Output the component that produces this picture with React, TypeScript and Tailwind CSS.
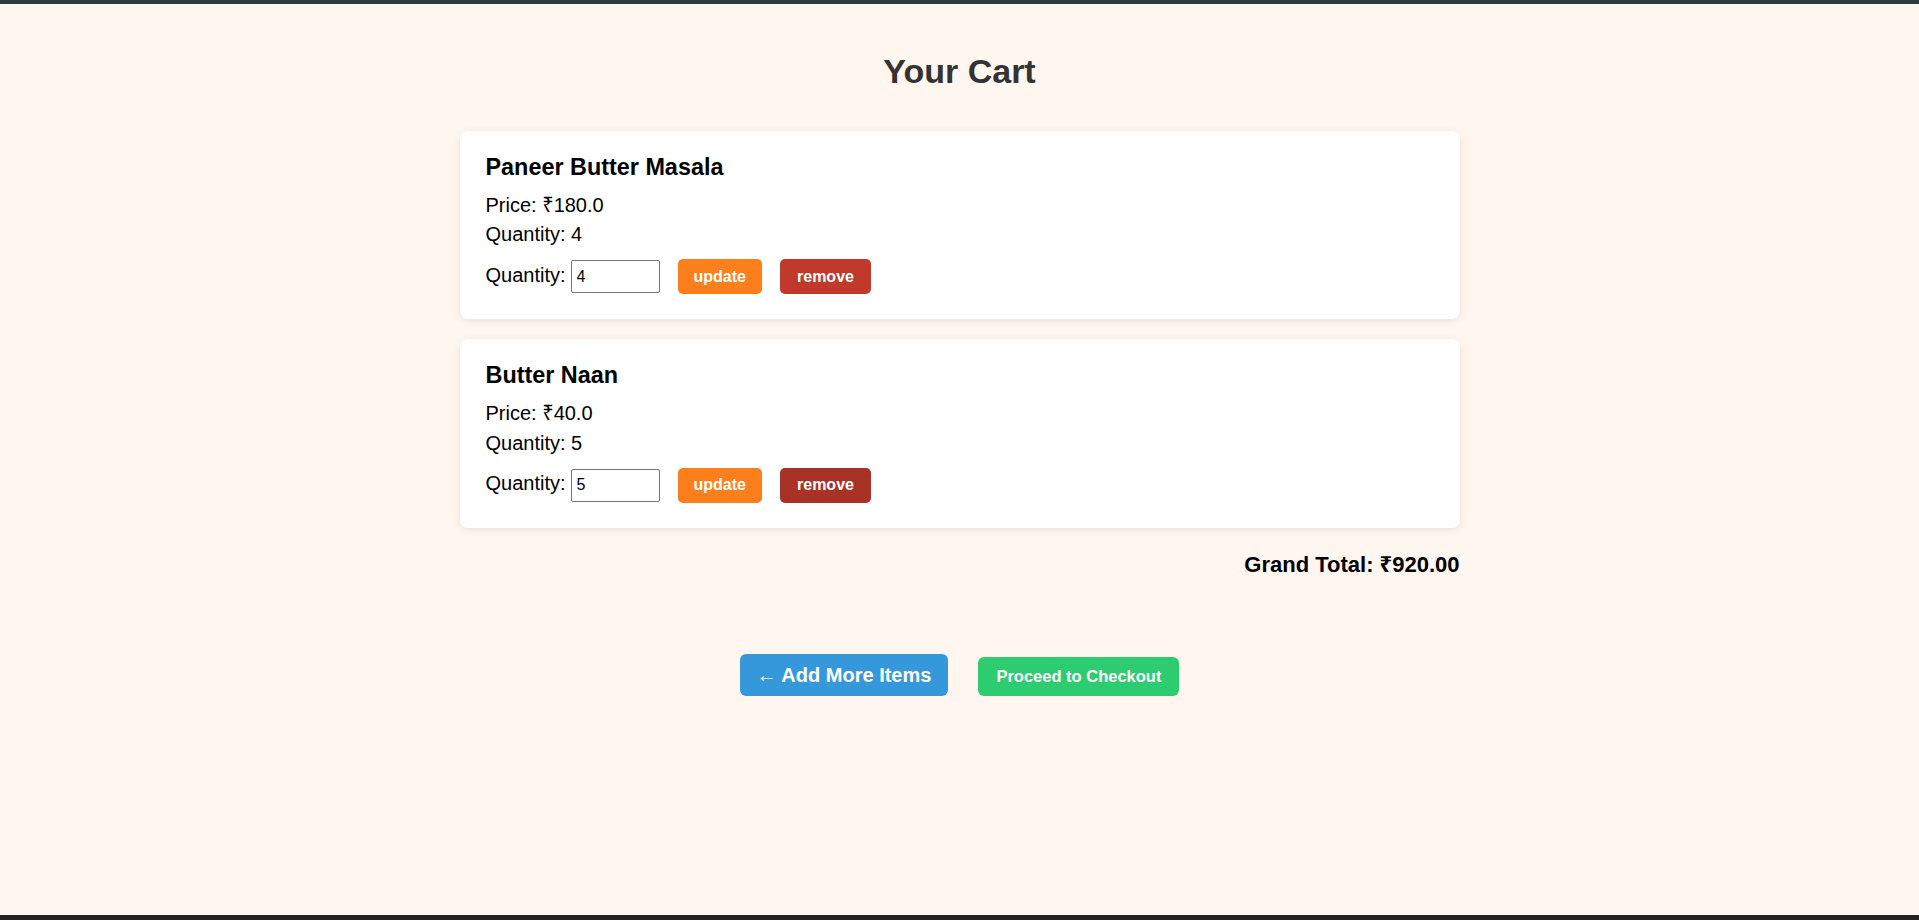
import { useState } from "react";

type Item = { id: number; name: string; price: number; qty: number };

const initial: Item[] = [
  { id: 1, name: "Paneer Butter Masala", price: 180, qty: 4 },
  { id: 2, name: "Butter Naan", price: 40, qty: 5 },
];

export default function App() {
  const [items] = useState(initial);
  const total = items.reduce((a, i) => a + i.price * i.qty, 0);

  return (
    <div className="h-screen flex flex-col bg-[#fff6ef] font-['Liberation_Sans','Noto_Sans',sans-serif] text-black">
      <div className="h-[4px] bg-[#2b3d3d]" />
      <main className="flex-1 flex flex-col items-center">
        <h1 className="mt-[48px] text-[34px] leading-[39px] font-bold text-[#333]">Your Cart</h1>

        <div className="w-[1000px] mt-[40px] flex flex-col gap-[20px]">
          {items.map((it, idx) => (
            <div
              key={it.id}
              className="bg-white rounded-[8px] shadow-[0_2px_8px_rgba(0,0,0,0.09)] pt-[23px] pb-[25px] px-[26px]"
            >
              <h3 className="text-[23.4px] leading-[27px] font-bold">{it.name}</h3>
              <p className="mt-[12.6px] text-[20px] leading-[23px]">Price: ₹{it.price.toFixed(1)}</p>
              <p className="mt-[6.7px] text-[20px] leading-[23px]">Quantity: {it.qty}</p>
              <div className="mt-[13px] h-[35px] flex items-center">
                <span className="text-[20px] leading-[23px] mb-[3px]">Quantity:</span>
                <input
                  type="number"
                  defaultValue={it.qty}
                  className="ml-[5px] w-[89px] h-[33px] border border-[#767676] rounded-[2px] px-[5px] text-[16px] bg-white outline-none [appearance:textfield]"
                />
                <button className="ml-[18px] h-[35px] px-4 rounded-[5px] bg-[#fd7f1c] text-white text-[16px] font-bold">
                  update
                </button>
                <button
                  className={
                    idx === 0
                      ? "ml-[18px] h-[35px] px-[17px] rounded-[5px] bg-[#c0392b] text-white text-[16px] font-bold"
                      : "ml-[18px] h-[35px] px-[17px] rounded-[5px] bg-[#a93226] text-white text-[16px] font-bold"
                  }
                >
                  remove
                </button>
              </div>
            </div>
          ))}
        </div>

        <div className="w-[1000px] mt-[24px] text-right text-[22px] leading-[25px] font-bold">
          Grand Total: ₹{total.toFixed(2)}
        </div>

        <div className="mt-[77px] flex items-end gap-[30px]">
          <button className="h-[42px] px-[17px] rounded-[6px] bg-[#3598db] text-white text-[20px] font-bold">
            <span className="font-normal">←</span> Add More Items
          </button>
          <button className="h-[39px] px-[18px] rounded-[6px] bg-[#2ecc71] text-white text-[16.5px] font-bold">
            Proceed to Checkout
          </button>
        </div>
      </main>
      <div className="h-[5px] bg-[#222]" />
    </div>
  );
}
